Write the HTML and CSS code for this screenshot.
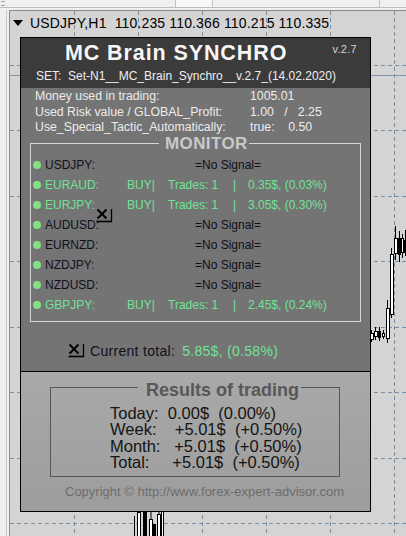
FILE: index.html
```html
<!DOCTYPE html>
<html>
<head>
<meta charset="utf-8">
<link rel="stylesheet" href="styles.css">
</head>
<body>
<div class="screen">
  <div class="topbar">
    <div class="tb-seg tb-a"><span class="menu-glyph"></span></div>
    <div class="tb-seg tb-b"></div>
    <div class="tb-seg tb-c"></div>
    <div class="tb-seg tb-d"></div>
  </div>
  <div class="main">
    <div class="leftbar"></div>
    <div class="chart">
      <svg class="chart-bg" width="396" height="525" viewBox="0 0 396 525">
        <g transform="translate(-10,-11)">
          <g class="grid" stroke="#7b8da1" stroke-width="1" stroke-dasharray="4 3" fill="none">
            <line x1="74.5" y1="11" x2="74.5" y2="536"/>
            <line x1="138.5" y1="11" x2="138.5" y2="536"/>
            <line x1="202.5" y1="11" x2="202.5" y2="536"/>
            <line x1="266.5" y1="11" x2="266.5" y2="536"/>
            <line x1="330.5" y1="11" x2="330.5" y2="536"/>
            <line x1="394.5" y1="11" x2="394.5" y2="536"/>
            <line x1="10" y1="65.5" x2="406" y2="65.5"/>
            <line x1="10" y1="130.5" x2="406" y2="130.5"/>
            <line x1="10" y1="196.5" x2="406" y2="196.5"/>
            <line x1="10" y1="261.5" x2="406" y2="261.5"/>
            <line x1="10" y1="327.5" x2="406" y2="327.5"/>
            <line x1="10" y1="392.5" x2="406" y2="392.5"/>
            <line x1="10" y1="458.5" x2="406" y2="458.5"/>
            <line x1="10" y1="523.5" x2="406" y2="523.5"/>
          </g>
          <line x1="10" y1="75.5" x2="406" y2="75.5" stroke="#8193a8" stroke-width="1"/>
          <g stroke="#000" stroke-width="1">
            <line x1="371.5" y1="330" x2="371.5" y2="342"/>
            <rect x="370.5" y="333.5" width="3" height="6" fill="#fff"/>
            <line x1="375.5" y1="327" x2="375.5" y2="340"/>
            <rect x="374.5" y="331.5" width="3" height="5" fill="#fff"/>
            <line x1="379.5" y1="327" x2="379.5" y2="341"/>
            <rect x="378.5" y="331.5" width="2" height="6" fill="#000"/>
            <line x1="383.5" y1="330" x2="383.5" y2="339"/>
            <rect x="382.5" y="333.5" width="2" height="3" fill="#fff"/>
            <line x1="387.5" y1="300" x2="387.5" y2="343"/>
            <rect x="386.5" y="308.5" width="3" height="30" fill="#fff"/>
            <line x1="391.5" y1="248" x2="391.5" y2="318"/>
            <rect x="390.5" y="254.5" width="3" height="60" fill="#fff"/>
            <line x1="395.5" y1="226" x2="395.5" y2="260"/>
            <rect x="394.5" y="238.5" width="3" height="15" fill="#fff"/>
            <line x1="399.5" y1="231" x2="399.5" y2="262"/>
            <rect x="398.5" y="238.5" width="2" height="16" fill="#000"/>
            <line x1="402.5" y1="234" x2="402.5" y2="258"/>
            <rect x="401.5" y="238.5" width="2" height="14" fill="#fff"/>
            <line x1="405.5" y1="230" x2="405.5" y2="256"/>
            <rect x="404.5" y="240.5" width="2" height="12" fill="#000"/>

            <line x1="134.5" y1="516" x2="134.5" y2="536"/>
            <line x1="139" y1="505" x2="139" y2="536"/>
            <rect x="137.5" y="512.5" width="3" height="30" fill="#fff"/>
            <rect x="143.5" y="511.5" width="3" height="30" fill="#000"/>
            <line x1="151" y1="510" x2="151" y2="536"/>
            <rect x="149.5" y="519.5" width="3" height="20" fill="#fff"/>
            <rect x="153.5" y="524.5" width="2" height="15" fill="#000"/>
            <line x1="159" y1="508" x2="159" y2="536"/>
            <rect x="157.5" y="514.5" width="3" height="25" fill="#fff"/>
            <rect x="161.5" y="510.5" width="2" height="30" fill="#fff"/>
          </g>
        </g>
      </svg>

      <div class="symbol-line">
        <span class="tri"></span>
        <span class="sym-text">USDJPY,H1  110.235 110.366 110.215 110.335</span>
      </div>

      <div class="panel">
        <div class="p-head">
          <div class="title-row">
            <div class="title">MC Brain SYNCHRO</div>
            <div class="ver">v.2.7</div>
          </div>
          <div class="set">SET:  Set-N1__MC_Brain_Synchro__v.2.7_(14.02.2020)</div>
        </div>

        <div class="p-mid">
          <div class="info">
            <span>Money used in trading:</span><span>1005.01</span>
            <span>Used Risk value / GLOBAL_Profit:</span><span>1.00   /   2.25</span>
            <span>Use_Special_Tactic_Automatically:</span><span>true:    0.50</span>
          </div>

          <div class="monitor">
            <div class="mon-head"><span>MONITOR</span></div>
            <div class="mon-body">
              <div class="row"><span class="dot"></span><span>USDJPY:</span><span class="nosig">=No Signal=</span></div>
              <div class="row buy"><span class="dot"></span><span>EURAUD:</span><span>BUY|</span><span>Trades: 1</span><span>|</span><span>0.35$, (0.03%)</span></div>
              <div class="row buy"><span class="dot"></span><span>EURJPY:</span><span>BUY|</span><span>Trades: 1</span><span>|</span><span>3.05$, (0.30%)</span></div>
              <div class="row"><span class="dot"></span><span>AUDUSD:</span><span class="nosig">=No Signal=</span></div>
              <div class="row"><span class="dot"></span><span>EURNZD:</span><span class="nosig">=No Signal=</span></div>
              <div class="row"><span class="dot"></span><span>NZDJPY:</span><span class="nosig">=No Signal=</span></div>
              <div class="row"><span class="dot"></span><span>NZDUSD:</span><span class="nosig">=No Signal=</span></div>
              <div class="row buy"><span class="dot"></span><span>GBPJPY:</span><span>BUY|</span><span>Trades: 1</span><span>|</span><span>2.45$, (0.24%)</span></div>
            </div>
            <svg class="xicon over" width="18" height="15" viewBox="0 0 18 15">
              <path d="M2.5 1.5 L11.5 10.5 M11.5 1.5 L2.5 10.5" stroke="#000" stroke-width="2" fill="none"/>
              <path d="M1.5 13.5 H17" stroke="#000" stroke-width="1.6" fill="none"/>
              <path d="M16.5 1 V14" stroke="#000" stroke-width="1.3" fill="none"/>
            </svg>
          </div>

          <div class="total">
            <svg class="xicon" width="18" height="15" viewBox="0 0 18 15">
              <path d="M2.5 1.5 L11.5 10.5 M11.5 1.5 L2.5 10.5" stroke="#000" stroke-width="2" fill="none"/>
              <path d="M1.5 13.5 H17" stroke="#000" stroke-width="1.6" fill="none"/>
              <path d="M16.5 1 V14" stroke="#000" stroke-width="1.3" fill="none"/>
            </svg>
            <span>Current total:</span>
            <span class="val">5.85$, (0.58%)</span>
          </div>
        </div>

        <div class="p-bot">
          <div class="results">
            <div class="res-head"><span>Results of trading</span></div>
            <div class="res-body">Today:  0.00$  (0.00%)
Week:    +5.01$  (+0.50%)
Month:   +5.01$  (+0.50%)
Total:     +5.01$  (+0.50%)</div>
          </div>
          <div class="copy">Copyright © http://www.forex-expert-advisor.com</div>
        </div>
      </div>
    </div>
  </div>
</div>
</body>
</html>
```

FILE: styles.css
```css
html, body {
  margin: 0;
  padding: 0;
}
body {
  width: 406px;
  height: 536px;
  overflow: hidden;
  background: #f0f0f0;
  font-family: "Liberation Sans", Arial, sans-serif;
}
.screen {
  width: 406px;
  height: 536px;
  display: flex;
  flex-direction: column;
}
.topbar {
  height: 7px;
  border-bottom: 1px solid #bdbdbd;
  background: #f0f0f0;
  display: flex;
  flex: none;
}
.tb-seg {
  height: 7px;
  box-sizing: border-box;
  border-right: 1px solid #c4c4c4;
  overflow: hidden;
}
.tb-a { width: 176px; }
.tb-b { width: 37px; background: #f8f8f8; }
.tb-c { width: 167px; }
.tb-d { flex: 1; border-right: 0; }
.menu-glyph {
  display: block;
  width: 4px;
  height: 3px;
  margin: 1px 0 0 1px;
  border-top: 1px solid #a8a8a8;
  border-bottom: 1px solid #a8a8a8;
}
.main {
  flex: 1;
  display: flex;
  padding-top: 2px;
  min-height: 0;
}
.leftbar {
  width: 6px;
  border-right: 1px solid #c8c8c8;
  margin-right: 2px;
}
.chart {
  flex: 1;
  position: relative;
  background: #d4d4d4;
  border-top: 1px solid #8a8a8a;
  border-left: 1px solid #8a8a8a;
  overflow: hidden;
}
.chart-bg {
  position: absolute;
  left: 0;
  top: 0;
  display: block;
}
.symbol-line {
  position: relative;
  display: flex;
  align-items: center;
  height: 18px;
  padding-top: 3px;
  padding-left: 3px;
  font-size: 14px;
  letter-spacing: 0.15px;
  color: #000;
  white-space: pre;
}
.tri {
  width: 0;
  height: 0;
  border-left: 5.5px solid transparent;
  border-right: 5.5px solid transparent;
  border-top: 6px solid #000;
  margin-right: 7px;
}
.panel {
  position: relative;
  margin: 5px 0 0 10px;
  width: 351px;
  border: 1px solid #000;
  box-sizing: border-box;
}
.p-head {
  background: #3b3b3b;
  height: 50px;
  padding-top: 3px;
  box-sizing: border-box;
}
.title-row {
  display: flex;
  align-items: flex-start;
  height: 24px;
}
.title {
  margin-left: 44px;
  font-weight: bold;
  font-size: 21.5px;
  line-height: 24px;
  letter-spacing: 0.9px;
  color: #f6f6f6;
}
.ver {
  margin-left: auto;
  margin-right: 13px;
  margin-top: 2px;
  font-size: 11px;
  line-height: 13px;
  color: #d6d6d6;
  letter-spacing: 0.3px;
}
.set {
  margin: 3px 0 0 15px;
  font-size: 12px;
  line-height: 16px;
  color: #eeeeee;
  white-space: pre;
}
.p-mid {
  background: #747474;
  height: 284px;
  box-sizing: border-box;
  padding-top: 1px;
  border-bottom: 1px solid #000;
}
.info {
  display: grid;
  grid-template-columns: 215px auto;
  padding-left: 14px;
  font-size: 12.3px;
  line-height: 15.5px;
  color: #ececec;
  white-space: pre;
}
.monitor {
  position: relative;
  margin-left: 9px;
  width: 331px;
}
.mon-head {
  display: flex;
  height: 16px;
}
.mon-head::before {
  content: "";
  width: 128px;
  margin-top: 7px;
  border-top: 1px solid #d6d6d6;
  border-left: 1px solid #d6d6d6;
}
.mon-head span {
  padding: 0 1px 0 6px;
  font-weight: bold;
  font-size: 17px;
  line-height: 16px;
  letter-spacing: 0.4px;
  color: #c9c9c9;
}
.mon-head::after {
  content: "";
  flex: 1;
  margin-top: 7px;
  border-top: 1px solid #d6d6d6;
  border-right: 1px solid #d6d6d6;
}
.mon-body {
  border: 1px solid #d6d6d6;
  border-top: 0;
  padding: 3px 0 6px;
}
.row {
  display: grid;
  grid-template-columns: 14px 82px 41px 65px 15px auto;
  height: 20px;
  align-items: center;
  font-size: 12px;
  color: #10101c;
  white-space: pre;
}
.row.buy {
  color: #70e396;
}
.nosig {
  grid-column: 3 / -1;
  padding-left: 68px;
}
.dot {
  width: 8px;
  height: 8px;
  border-radius: 50%;
  background: #82e182;
  margin-left: 2px;
}
.xicon {
  display: block;
}
.xicon.over {
  position: absolute;
  left: 65px;
  top: 72px;
}
.total {
  display: flex;
  align-items: center;
  margin-top: 20px;
  padding-left: 46px;
  height: 18px;
  font-size: 14px;
  letter-spacing: 0.3px;
  color: #10101c;
}
.total .xicon {
  margin-right: 5px;
}
.total .val {
  color: #70e396;
  margin-left: 7px;
}
.p-bot {
  height: 139px;
  background: linear-gradient(#a9a9a9, #9d9d9d);
  padding-top: 10px;
  box-sizing: border-box;
}
.results {
  margin-left: 29px;
  width: 290px;
}
.res-head {
  display: flex;
  height: 17px;
}
.res-head::before {
  content: "";
  width: 87px;
  margin-top: 5px;
  border-top: 1px solid #555;
  border-left: 1px solid #555;
}
.res-head span {
  padding: 0 2px 0 8px;
  font-weight: bold;
  font-size: 18px;
  line-height: 17px;
  color: #575757;
}
.res-head::after {
  content: "";
  flex: 1;
  margin-top: 5px;
  border-top: 1px solid #555;
  border-right: 1px solid #555;
}
.res-body {
  border: 1px solid #555;
  border-top: 0;
  padding: 6px 0 6px 59px;
  font-size: 16.5px;
  line-height: 16.3px;
  color: #141414;
  white-space: pre;
}
.copy {
  margin-top: 7px;
  padding-left: 44px;
  font-size: 13px;
  line-height: 16px;
  color: #6d6d6d;
}
```
